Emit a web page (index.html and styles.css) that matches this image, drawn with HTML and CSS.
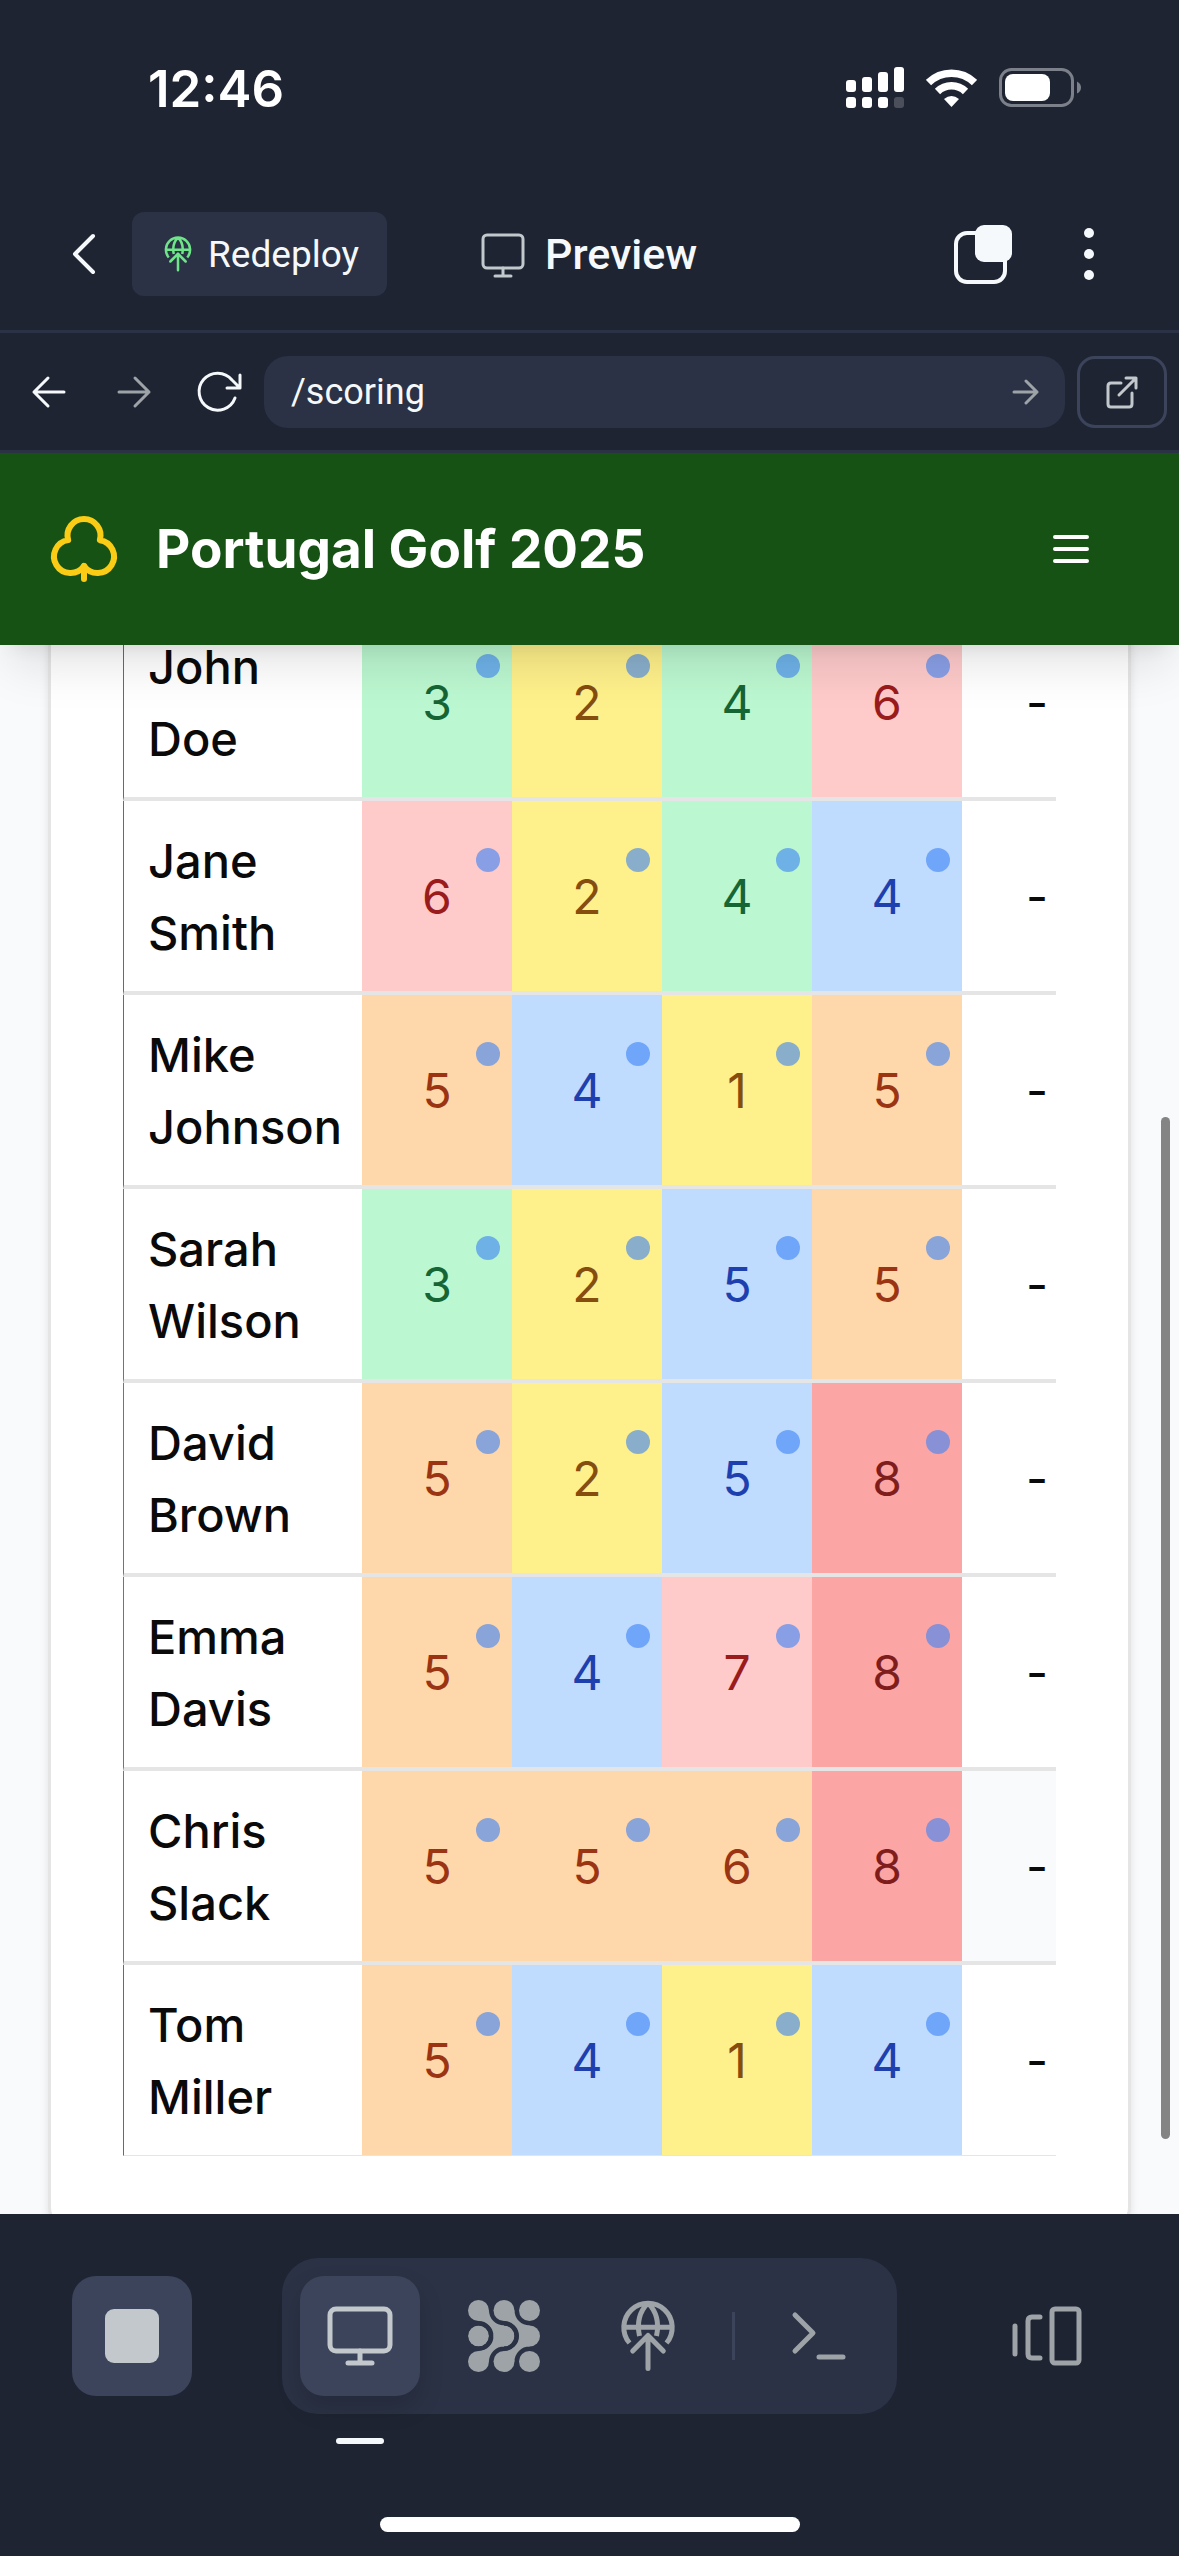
FILE: index.html
```html
<!DOCTYPE html>
<html lang="en">
<head>
<meta charset="utf-8">
<meta name="viewport" content="width=device-width, initial-scale=1">
<title>Portugal Golf 2025</title>
<link rel="stylesheet" href="styles.css">
</head>
<body>
<svg class="defs" aria-hidden="true">
  <symbol id="globe-up" viewBox="0 0 72 72">
    <path d="M17.500 43A24.200 24.200 0 1 1 54.500 43M12 27.300h48M36 3C28 11 24.500 22 27.500 36M36 3c8 8 11.500 19 8.500 33" stroke-linecap="butt"/>
    <path d="M20.700 51 36 35.500 51.300 51M36 35.500V68.500"/>
  </symbol>
</svg>
<div class="app">
  <div class="status">
    <time class="clock">12:46</time>
    <div class="indicators">
      <svg width="58" height="42" viewBox="0 0 58 42" fill="#fff"><rect y="13" width="10" height="12" rx="3"/><rect x="16" y="10" width="10" height="15" rx="3"/><rect x="32" y="5" width="10" height="20" rx="3"/><rect x="48" width="10" height="25" rx="3"/><rect y="30" width="10" height="11" rx="3"/><rect x="16" y="30" width="10" height="11" rx="3"/><rect x="32" y="30" width="10" height="11" rx="3"/><rect x="48" y="30" width="10" height="11" rx="3" opacity=".2"/></svg>
      <svg width="51" height="38" viewBox="0 0 51 38"><path d="M2.500 13.500a33 33 0 0 1 46 0M11.500 22.500a20 20 0 0 1 28 0" fill="none" stroke="#fff" stroke-width="7.500"/><path d="M18 30q7.500-6 15 0l-7.500 8z" fill="#fff"/></svg>
      <svg width="82" height="40" viewBox="0 0 82 40"><rect x="1.500" y="1.500" width="72" height="36" rx="11" fill="none" stroke="#7c808a" stroke-width="3"/><rect x="6" y="6" width="45" height="27" rx="8" fill="#fff"/><path d="M78 13.500q4 2 4 6t-4 6z" fill="#7c808a"/></svg>
    </div>
  </div>

  <header class="topbar">
    <button class="plain back" aria-label="Back"><svg width="24" height="42" viewBox="0 0 24 42"><path d="M21 3 3 21l18 18"/></svg></button>
    <button class="redeploy"><svg class="globe" width="36" height="36"><use href="#globe-up"/></svg>Redeploy</button>
    <h1 class="page-name"><svg width="48" height="48" viewBox="0 0 48 48"><rect x="4" y="5" width="40" height="33" rx="4"/><path d="M24 38v8M16 46h16"/></svg>Preview</h1>
    <button class="plain tabs" aria-label="Tabs"><svg width="60" height="60" viewBox="0 0 60 60"><rect x="3" y="9" width="49" height="49" rx="11"/><rect class="solid" x="22" y="1" width="37" height="37" rx="9"/></svg></button>
    <button class="plain more" aria-label="More"><svg width="12" height="54" viewBox="0 0 12 54"><g class="solid"><circle cx="6" cy="6" r="5"/><circle cx="6" cy="27" r="5"/><circle cx="6" cy="48" r="5"/></g></svg></button>
  </header>

  <nav class="address-bar">
    <div class="nav-buttons">
      <button class="plain" aria-label="Go back"><svg width="36" height="36" viewBox="0 0 36 36"><path d="M33 18H3M17 4 3 18l14 14"/></svg></button>
      <button class="plain dim" aria-label="Go forward"><svg width="36" height="36" viewBox="0 0 36 36"><path d="M3 18h30M19 4l14 14-14 14"/></svg></button>
      <button class="plain" aria-label="Reload"><svg width="48" height="48" viewBox="0 0 48 48"><path d="M40 30a18.500 18.500 0 1 1-3-18l8 8M45 7v13H32"/></svg></button>
    </div>
    <div class="address">
      <input type="text" value="/scoring" aria-label="Path">
      <button class="plain dim" aria-label="Go"><svg width="28" height="28" viewBox="0 0 28 28"><path d="M2 14h23M14 3l11 11-11 11"/></svg></button>
    </div>
    <button class="open" aria-label="Open in new tab"><svg width="36" height="36" viewBox="0 0 36 36"><path d="M17 9H7q-3 0-3 3v18q0 3 3 3h18q3 0 3-3V19M22 4h10v10M32 4 15 21"/></svg></button>
  </nav>

  <div class="site">
    <div class="site-header">
      <svg class="club" width="72" height="72" viewBox="0 0 24 24"><path d="M17.280 9.050a5.500 5.500 0 1 0-10.560 0A5.500 5.500 0 1 0 12 17.660a5.500 5.500 0 1 0 5.280-8.600Z"/><path d="M12 17.660V22"/></svg>
      <h2>Portugal Golf 2025</h2>
      <button class="plain menu" aria-label="Menu"><svg width="48" height="48" viewBox="0 0 24 24"><path d="M4 6h16M4 12h16M4 18h16"/></svg></button>
    </div>
    <main class="content">
      <section class="card">
        <div class="table-wrap">
          <table>
            <colgroup><col class="col-name"><col><col><col><col><col></colgroup>
            <tbody>
              <tr class="team-blue"><th scope="row">John Doe</th><td class="green"><span>3</span></td><td class="yellow"><span>2</span></td><td class="green"><span>4</span></td><td class="pink"><span>6</span></td><td>-</td></tr>
              <tr class="team-blue"><th scope="row">Jane Smith</th><td class="pink"><span>6</span></td><td class="yellow"><span>2</span></td><td class="green"><span>4</span></td><td class="blue"><span>4</span></td><td>-</td></tr>
              <tr class="team-blue"><th scope="row">Mike Johnson</th><td class="orange"><span>5</span></td><td class="blue"><span>4</span></td><td class="yellow"><span>1</span></td><td class="orange"><span>5</span></td><td>-</td></tr>
              <tr class="team-red"><th scope="row">Sarah Wilson</th><td class="green"><span>3</span></td><td class="yellow"><span>2</span></td><td class="blue"><span>5</span></td><td class="orange"><span>5</span></td><td>-</td></tr>
              <tr class="team-red"><th scope="row">David Brown</th><td class="orange"><span>5</span></td><td class="yellow"><span>2</span></td><td class="blue"><span>5</span></td><td class="red"><span>8</span></td><td>-</td></tr>
              <tr class="team-red"><th scope="row">Emma Davis</th><td class="orange"><span>5</span></td><td class="blue"><span>4</span></td><td class="pink"><span>7</span></td><td class="red"><span>8</span></td><td>-</td></tr>
              <tr class="team-red"><th scope="row">Chris Slack</th><td class="orange"><span>5</span></td><td class="orange"><span>5</span></td><td class="orange"><span>6</span></td><td class="red"><span>8</span></td><td class="shade">-</td></tr>
              <tr class="team-blue"><th scope="row">Tom Miller</th><td class="orange"><span>5</span></td><td class="blue"><span>4</span></td><td class="yellow"><span>1</span></td><td class="blue"><span>4</span></td><td>-</td></tr>
            </tbody>
          </table>
        </div>
      </section>
    </main>
    <div class="scroll-thumb"></div>
  </div>

  <footer class="dock">
    <div class="dock-row">
      <button class="tile filled" aria-label="Stop"><svg width="54" height="54" viewBox="0 0 54 54"><rect width="54" height="54" rx="9" fill="#c2c8cc"/></svg></button>
      <div class="group">
        <button class="tile filled active" aria-label="Preview"><svg width="72" height="72" viewBox="0 0 72 72"><rect x="6" y="9" width="60" height="42" rx="6"/><path d="M36 51v12M24 63h24"/></svg></button>
        <button class="tile" aria-label="Agent"><svg width="72" height="72" viewBox="0 0 72 72"><g fill="#9ea3a7" stroke="none"><circle cx="10.500" cy="10.500" r="10.500"/><circle cx="36" cy="10.500" r="10.500"/><circle cx="61.500" cy="10.500" r="10.500"/><circle cx="10.500" cy="36" r="10.500"/><circle cx="36" cy="36" r="10.500"/><circle cx="61.500" cy="36" r="10.500"/><circle cx="10.500" cy="61.500" r="10.500"/><circle cx="36" cy="61.500" r="10.500"/><circle cx="61.500" cy="61.500" r="10.500"/>
          <path d="M21 10.500A15 15 0 0 0 36 25.500V46.500A15 15 0 0 0 21 61.500L10.500 51A15 15 0 0 0 10.500 21Z"/><path d="M46.500 10.500A15 15 0 0 0 61.500 25.500V46.500A15 15 0 0 0 46.500 61.500L36 51A15 15 0 0 0 36 21Z"/></g>
          <circle cx="10.500" cy="36" r="12.500" stroke="#2b3245" stroke-width="4"/><path d="M36 23.500a12.500 12.500 0 0 1 0 25" stroke="#2b3245" stroke-width="4" stroke-linecap="butt"/></svg></button>
        <button class="tile" aria-label="Deploy"><svg width="72" height="72"><use href="#globe-up"/></svg></button>
        <span class="divider"></span>
        <button class="tile" aria-label="Shell"><svg width="72" height="72" viewBox="0 0 72 72"><path d="M12 15l18 18-18 18M36 57h24"/></svg></button>
      </div>
      <button class="tile" aria-label="Switch tabs"><svg width="72" height="72" viewBox="0 0 72 72"><rect x="41" y="9" width="27" height="54" rx="3"/><path d="M29 17H21q-4 0-4 4v33q0 4 4 4h8M4 26v28"/></svg></button>
    </div>
    <div class="home-bar"></div>
  </footer>
</div>
</body>
</html>
```
FILE: styles.css
```css
* { box-sizing: border-box; }
body { margin: 0; background: #1e2432; font-family: Inter, "Liberation Sans", sans-serif; }
h1, h2 { margin: 0; }
button { font: inherit; color: inherit; border: 0; padding: 0; background: none; }
svg { display: block; flex: none; }
.defs { position: absolute; width: 0; height: 0; }
.app { display: flex; flex-direction: column; height: 100vh; color: #f5f9fc; }

.plain { display: flex; align-items: center; justify-content: center; }
.plain svg, .page-name svg, .open svg, .globe { fill: none; stroke: currentColor; stroke-width: 3; stroke-linecap: round; stroke-linejoin: round; }
.plain .solid { fill: currentColor; stroke: none; }
.dim { color: #9ea3a7; }

.status { display: flex; align-items: center; justify-content: space-between; height: 178px; padding: 0 98px 2px 148px; }
.clock { font-size: 51px; font-weight: 600; color: #fff; }
.indicators { display: flex; align-items: center; gap: 22px; }

.topbar { display: flex; align-items: center; height: 155px; padding: 0 84px 0 72px; border-bottom: 3px solid #2b3245; }
.back svg, .tabs svg { stroke-width: 4; }
.redeploy { display: flex; align-items: center; gap: 12px; height: 84px; margin-left: 36px; padding: 0 28px; border-radius: 12px; background: #2b3245; font-family: Roboto, sans-serif; font-size: 37px; }
.redeploy .globe { color: #6fe58a; stroke-width: 5; }
.page-name { display: flex; align-items: center; gap: 18px; margin-left: 92px; font-family: Roboto, sans-serif; font-size: 43px; font-weight: 500; }
.page-name svg { stroke: #c2c8cc; }
.tabs { margin-left: auto; }
.more { margin-left: 70px; }

.address-bar { display: flex; align-items: center; height: 120px; padding: 0 12px 0 6px; border-bottom: 3px solid #2b3245; }
.nav-buttons { display: flex; }
.nav-buttons button { width: 85px; height: 72px; }
.address { display: flex; flex: 1; align-items: center; height: 72px; margin: 0 12px 0 3px; padding: 0 25px 0 27px; border-radius: 24px; background: #2b3245; }
.address input { flex: 1; min-width: 0; border: 0; padding: 0; background: none; color: #f5f9fc; font-family: Roboto, sans-serif; font-size: 36px; }
.open { display: grid; place-items: center; width: 90px; height: 72px; border: 3px solid #3c445c; border-radius: 18px; color: #c2c8cc; }

.site { position: relative; display: flex; flex-direction: column; flex: 1; min-height: 0; overflow: hidden; background: #f9fafb; color: #0a0a0a; }
.site-header { position: relative; z-index: 1; display: flex; flex: none; align-items: center; height: 192px; padding: 0 84px 0 48px; background: #155214; color: #fff; box-shadow: 0 30px 45px -9px rgba(0, 0, 0, .1), 0 12px 18px -12px rgba(0, 0, 0, .1); }
.club { fill: none; stroke: #facc15; stroke-width: 2; stroke-linecap: round; stroke-linejoin: round; }
.site-header h2 { margin-left: 36px; font-size: 53px; font-weight: 700; }
.menu { margin-left: auto; }
.menu svg { stroke-width: 2; }

/* The list is scrolled part of a row under the header. */
.content { padding: 0 48px; margin-top: -38px; }
.card { padding: 0 72px 72px; border: 3px solid #e5e5e5; border-top: 0; border-radius: 0 0 24px 24px; background: #fff; box-shadow: 0 3px 9px rgba(0, 0, 0, .1); }
.table-wrap { overflow: hidden; }
table { width: 989px; table-layout: fixed; border-collapse: separate; border-spacing: 0; font-size: 48px; line-height: 72px; }
.col-name { width: 239px; }
th, td { padding: 24px 24px 22px; border-bottom: 4px solid #e5e5e5; font-weight: 400; text-align: center; }
th { border-left: 1px solid; text-align: left; font-size: 47px; font-weight: 500; }
tr:last-child th, tr:last-child td { border-bottom-width: 1px; }
.team-blue th { border-left-color: #2f72dc; }
.team-red th { border-left-color: #d94a45; }
td span { position: relative; display: block; }
td span::after { content: ""; position: absolute; top: -13px; right: -12px; width: 24px; height: 24px; border-radius: 50%; background: #3b82f6; opacity: .6; }
.green { background: #bbf7d0; color: #166534; }
.yellow { background: #fef08a; color: #854d0e; }
.pink { background: #fecaca; color: #991b1b; }
.blue { background: #bfdbfe; color: #1e40af; }
.orange { background: #fed7aa; color: #9a3412; }
.red { background: #fca5a5; color: #7f1d1d; }
.shade { background: #f9fafb; }
.scroll-thumb { position: absolute; right: 9px; top: 664px; bottom: 75px; width: 9px; border-radius: 5px; background: #848484; }

.dock { display: flex; flex: none; flex-direction: column; align-items: center; justify-content: space-between; height: 342px; padding: 44px 72px 24px; }
.dock-row { display: flex; align-items: center; justify-content: space-between; width: 100%; }
.group { display: flex; align-items: center; gap: 24px; padding: 18px; border-radius: 36px; background: #2b3245; }
.tile { position: relative; display: grid; place-items: center; width: 120px; height: 120px; border-radius: 24px; }
.tile svg { fill: none; stroke: #9ea3a7; stroke-width: 5; stroke-linecap: round; stroke-linejoin: round; }
.filled { background: #3c445c; }
.filled svg { stroke: none; }
.active { box-shadow: 0 12px 24px rgba(0, 0, 0, .15); }
.active svg { stroke: #c2c8cc; }
.active::after { content: ""; position: absolute; left: 36px; top: 162px; width: 48px; height: 6px; border-radius: 3px; background: #f5f9fc; }
.divider { width: 3px; height: 48px; background: #3c445c; }
.home-bar { width: 420px; height: 15px; border-radius: 8px; background: #fff; }
```
